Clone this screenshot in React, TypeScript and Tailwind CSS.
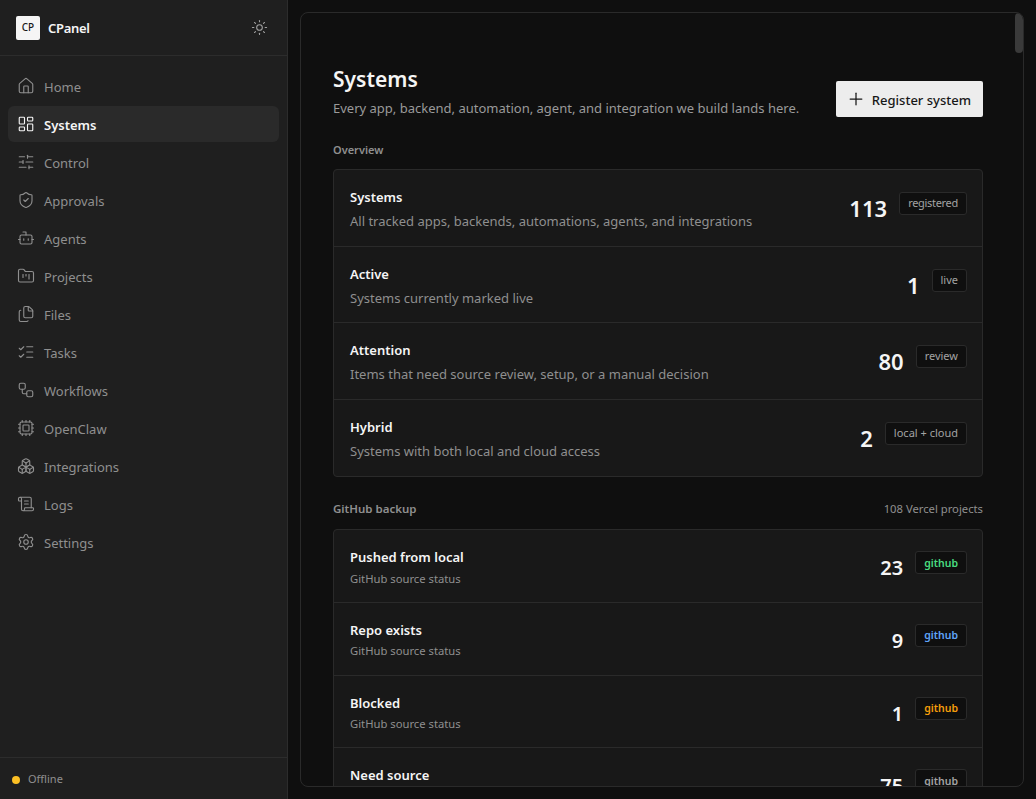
import React from 'react';
import {
  Bot, Boxes, Cpu, Files, FolderKanban, House, LayoutDashboard, ListChecks,
  Plus, ScrollText, Settings, ShieldCheck, SlidersHorizontal, Sun, Workflow,
} from 'lucide-react';

const NAV_ITEMS = [
  { label: 'Home', icon: House },
  { label: 'Systems', icon: LayoutDashboard, active: true },
  { label: 'Control', icon: SlidersHorizontal },
  { label: 'Approvals', icon: ShieldCheck },
  { label: 'Agents', icon: Bot },
  { label: 'Projects', icon: FolderKanban },
  { label: 'Files', icon: Files },
  { label: 'Tasks', icon: ListChecks },
  { label: 'Workflows', icon: Workflow },
  { label: 'OpenClaw', icon: Cpu },
  { label: 'Integrations', icon: Boxes },
  { label: 'Logs', icon: ScrollText },
  { label: 'Settings', icon: Settings },
];

const OVERVIEW = [
  { title: 'Systems', desc: 'All tracked apps, backends, automations, agents, and integrations', count: 113, tag: 'registered', tagClass: 'tracking-[-0.3px]' },
  { title: 'Active', desc: 'Systems currently marked live', count: 1, tag: 'live', tagClass: '' },
  { title: 'Attention', desc: 'Items that need source review, setup, or a manual decision', count: 80, tag: 'review', tagClass: '' },
  { title: 'Hybrid', desc: 'Systems with both local and cloud access', count: 2, tag: 'local + cloud', tagClass: '' },
];

const BACKUP = [
  { title: 'Pushed from local', count: 23, color: 'text-[#4ade80]' },
  { title: 'Repo exists', count: 9, color: 'text-[#60a5fa]' },
  { title: 'Blocked', count: 1, color: 'text-[#f59e0b]' },
  { title: 'Need source', count: 75, color: 'text-[#a3a3a3]' },
];

function Sidebar() {
  return (
    <aside className="w-[288px] h-full shrink-0 flex flex-col bg-[#1f1f1f] border-r border-[#2c2c2c]">
      <div className="h-[56px] shrink-0 flex items-center justify-between pl-4 pr-[19px] border-b border-[#2c2c2c]">
        <div className="flex items-center gap-2">
          <div className="w-6 h-6 rounded-[2px] bg-[#f5f5f5] flex items-center justify-center text-[10px] font-medium text-[#171717]">CP</div>
          <span className="pt-[2px] text-[13px] font-semibold tracking-[-0.3px] text-[#f5f5f5]">CPanel</span>
        </div>
        <Sun size={17} strokeWidth={1.5} className="text-[#a3a3a3]" />
      </div>
      <nav className="flex-1 px-2 pt-[12px] flex flex-col gap-[2px]">
        {NAV_ITEMS.map(item => (
          <div
            key={item.label}
            className={`h-9 flex items-center gap-[9px] pl-[9px] pr-3 rounded-md text-[13px] ${item.active ? 'bg-[#2a2a2a] text-[#f5f5f5] font-semibold' : 'text-[#8f8f8f]'}`}
          >
            <item.icon size={18} strokeWidth={1.5} />
            <span className="pt-[4px]">{item.label}</span>
          </div>
        ))}
      </nav>
      <div className="h-[42px] shrink-0 flex items-center gap-2 pl-3 pt-[2px] border-t border-[#2c2c2c] text-[11px] text-[#8f8f8f]">
        <span className="w-2 h-2 rounded-full bg-[#fbbf24]" />
        Offline
      </div>
    </aside>
  );
}

function Tag({ children, color = 'text-[#a3a3a3]', bold = false, className = '' }: { children: React.ReactNode; color?: string; bold?: boolean; className?: string }) {
  return (
    <span className={`h-[23px] flex items-center px-2 rounded-[3px] border border-[#2a2a2a] bg-[#0f0f0f] ${bold ? 'pt-[2px] text-[10.5px] font-semibold' : 'text-[11px]'} ${color} ${className}`}>
      {children}
    </span>
  );
}

export default function App() {
  return (
    <div className="w-[1036px] h-[799px] flex overflow-hidden bg-[#0f0f0f] font-['Noto_Sans','Open_Sans',sans-serif]">
      <Sidebar />
      <main className="flex-1 min-w-0 pl-3 pr-3 py-3">
        <div className="relative h-full rounded-lg border border-[#2a2a2a] overflow-hidden">
          <div className="absolute right-0 top-0 w-2 h-10 rounded bg-[#3a3a3a]" />
          <div className="pl-8 pr-10 pt-[49px]">
            <div className="flex items-end justify-between">
              <div>
                <h1 className="text-[21px] leading-[34px] font-semibold text-[#f5f5f5]">Systems</h1>
                <p className="text-[13px] leading-5 mt-[2px] whitespace-nowrap text-[#9a9a9a]">Every app, backend, automation, agent, and integration we build lands here.</p>
              </div>
              <button className="h-9 mb-[1px] pl-[10px] pr-3 flex items-center gap-[6px] whitespace-nowrap rounded-[2px] bg-[#ededed] text-[#171717] text-[13px] font-medium">
                <Plus size={20} strokeWidth={1.5} />
                <span className="pt-[3px]">Register system</span>
              </button>
            </div>

            <div className="mt-[24px] h-4 flex items-center text-[11px] font-semibold text-[#8f8f8f]">Overview</div>
            <div className="mt-[11px] rounded-[4px] border border-[#2a2a2a] bg-[#181818] divide-y divide-[#2a2a2a]">
              {OVERVIEW.map(row => (
                <div key={row.title} className="h-[76.5px] flex justify-between pl-4 pr-[15px]">
                  <div className="pt-[17px]">
                    <div className="text-[13px] leading-5 font-semibold text-[#f5f5f5]">{row.title}</div>
                    <div className="text-[13px] leading-5 mt-1 text-[#8f8f8f]">{row.desc}</div>
                  </div>
                  <div className="flex items-start gap-3 pt-[22px]">
                    <span className="text-[22px] leading-[22px] mt-[5px] font-semibold text-[#f5f5f5]">{row.count}</span>
                    <Tag className={row.tagClass}>{row.tag}</Tag>
                  </div>
                </div>
              ))}
            </div>

            <div className="mt-[24px] h-4 flex items-center justify-between">
              <span className="text-[11.5px] font-semibold text-[#8f8f8f]">GitHub backup</span>
              <span className="text-[11.25px] text-[#8f8f8f]">108 Vercel projects</span>
            </div>
            <div className="mt-[12px] rounded-[4px] border border-[#2a2a2a] bg-[#181818] divide-y divide-[#2a2a2a]">
              {BACKUP.map(row => (
                <div key={row.title} className="h-[72.75px] flex justify-between pl-4 pr-[15px]">
                  <div className="pt-[17px]">
                    <div className="text-[13px] leading-5 font-semibold text-[#f5f5f5]">{row.title}</div>
                    <div className="text-[11.25px] leading-4 mt-[3.5px] text-[#8f8f8f]">GitHub source status</div>
                  </div>
                  <div className="flex items-start gap-3 pt-[21px]">
                    <span className="text-[20px] leading-[20px] mt-[7px] font-semibold text-[#f5f5f5]">{row.count}</span>
                    <Tag color={row.color} bold>github</Tag>
                  </div>
                </div>
              ))}
            </div>
          </div>
        </div>
      </main>
    </div>
  );
}
